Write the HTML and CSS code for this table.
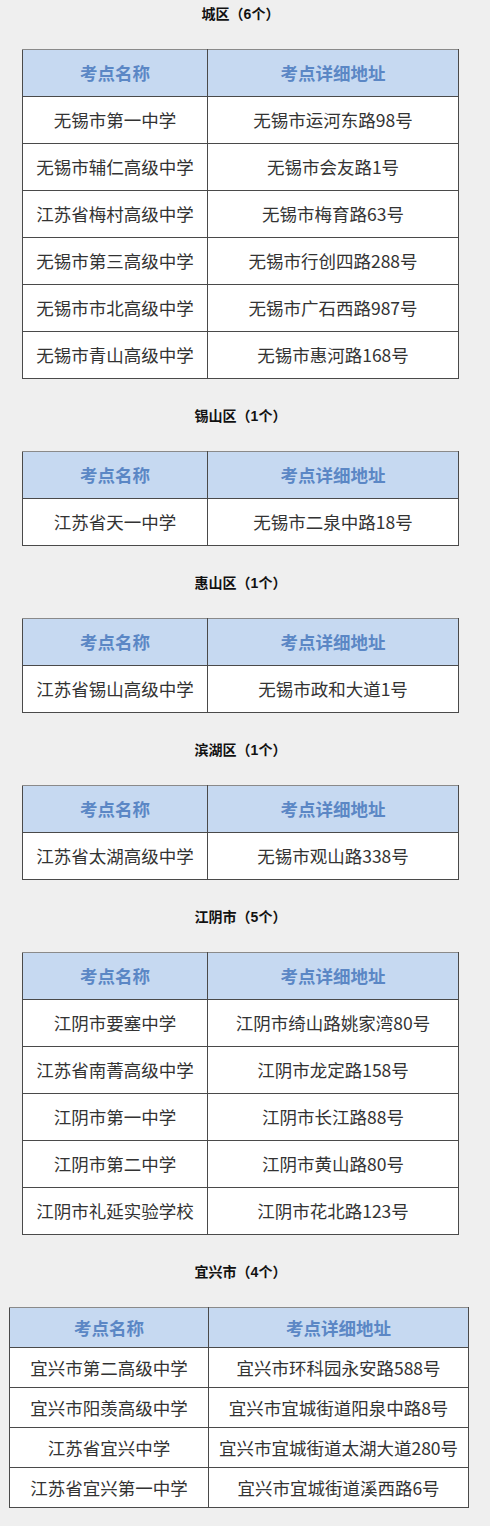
FILE: index.html
```html
<!DOCTYPE html>
<html lang="zh-CN">
<head>
<meta charset="utf-8">
<title>考点</title>
<link rel="stylesheet" href="styles.css">
</head>
<body>
<div class="page">
  <section class="block">
    <h2 class="title">城区（<b>6</b>个）</h2>
    <table class="sites">
      <colgroup><col class="c1"><col class="c2"></colgroup>
      <tr><th>考点名称</th><th>考点详细地址</th></tr>
      <tr><td>无锡市第一中学</td><td>无锡市运河东路98号</td></tr>
      <tr><td>无锡市辅仁高级中学</td><td>无锡市会友路1号</td></tr>
      <tr><td>江苏省梅村高级中学</td><td>无锡市梅育路63号</td></tr>
      <tr><td>无锡市第三高级中学</td><td>无锡市行创四路288号</td></tr>
      <tr><td>无锡市市北高级中学</td><td>无锡市广石西路987号</td></tr>
      <tr><td>无锡市青山高级中学</td><td>无锡市惠河路168号</td></tr>
    </table>
  </section>
  <section class="block">
    <h2 class="title">锡山区（<b>1</b>个）</h2>
    <table class="sites">
      <colgroup><col class="c1"><col class="c2"></colgroup>
      <tr><th>考点名称</th><th>考点详细地址</th></tr>
      <tr><td>江苏省天一中学</td><td>无锡市二泉中路18号</td></tr>
    </table>
  </section>
  <section class="block">
    <h2 class="title">惠山区（<b>1</b>个）</h2>
    <table class="sites">
      <colgroup><col class="c1"><col class="c2"></colgroup>
      <tr><th>考点名称</th><th>考点详细地址</th></tr>
      <tr><td>江苏省锡山高级中学</td><td>无锡市政和大道1号</td></tr>
    </table>
  </section>
  <section class="block">
    <h2 class="title">滨湖区（<b>1</b>个）</h2>
    <table class="sites">
      <colgroup><col class="c1"><col class="c2"></colgroup>
      <tr><th>考点名称</th><th>考点详细地址</th></tr>
      <tr><td>江苏省太湖高级中学</td><td>无锡市观山路338号</td></tr>
    </table>
  </section>
  <section class="block">
    <h2 class="title">江阴市（<b>5</b>个）</h2>
    <table class="sites">
      <colgroup><col class="c1"><col class="c2"></colgroup>
      <tr><th>考点名称</th><th>考点详细地址</th></tr>
      <tr><td>江阴市要塞中学</td><td>江阴市绮山路姚家湾80号</td></tr>
      <tr><td>江苏省南菁高级中学</td><td>江阴市龙定路158号</td></tr>
      <tr><td>江阴市第一中学</td><td>江阴市长江路88号</td></tr>
      <tr><td>江阴市第二中学</td><td>江阴市黄山路80号</td></tr>
      <tr><td>江阴市礼延实验学校</td><td>江阴市花北路123号</td></tr>
    </table>
  </section>
  <section class="block">
    <h2 class="title">宜兴市（<b>4</b>个）</h2>
    <table class="sites wide">
      <colgroup><col class="c1"><col class="c2"></colgroup>
      <tr><th>考点名称</th><th>考点详细地址</th></tr>
      <tr><td>宜兴市第二高级中学</td><td>宜兴市环科园永安路588号</td></tr>
      <tr><td>宜兴市阳羡高级中学</td><td>宜兴市宜城街道阳泉中路8号</td></tr>
      <tr><td>江苏省宜兴中学</td><td>宜兴市宜城街道太湖大道280号</td></tr>
      <tr><td>江苏省宜兴第一中学</td><td>宜兴市宜城街道溪西路6号</td></tr>
    </table>
  </section>
</div>
</body>
</html>
```
FILE: styles.css
```css
html, body {
  margin: 0;
  padding: 0;
  background: #efefef;
}
body {
  font-family: "Noto Sans CJK SC", "Noto Sans", sans-serif;
  color: #333;
  text-spacing-trim: space-all;
  font-feature-settings: "chws" 0, "halt" 0;
}
.page {
  width: 481px;
  padding-top: 3px;
  padding-bottom: 20px;
}
.block + .block {
  margin-top: 26px;
}
.title {
  margin: 0 0 25px;
  font-size: 14px;
  line-height: 20px;
  font-weight: 700;
  text-align: center;
  color: #111;
}
.title b {
  font-family: "Liberation Sans", Arial, sans-serif;
  font-weight: 700;
}
.sites {
  border-collapse: collapse;
  margin-left: 22px;
  width: 437px;
  table-layout: fixed;
}
.sites .c1 { width: 185px; }
.sites th,
.sites td {
  border: 1px solid #4a4a4a;
  height: 46px;
  padding: 0;
  text-align: center;
  vertical-align: middle;
  font-size: 17.5px;
  line-height: 24px;
  white-space: nowrap;
}
.sites tr:first-child th {
  border-top-color: #8a8a8a;
}
.sites th {
  background: #c6d9f1;
  color: #5b87c5;
  font-weight: 700;
}
.sites td {
  background: #fff;
  color: #333;
  font-weight: 400;
}
.sites.wide {
  margin-left: 9px;
  width: 460px;
}
.sites.wide .c1 { width: 199px; }
.sites.wide th,
.sites.wide td {
  height: 39px;
}
```
